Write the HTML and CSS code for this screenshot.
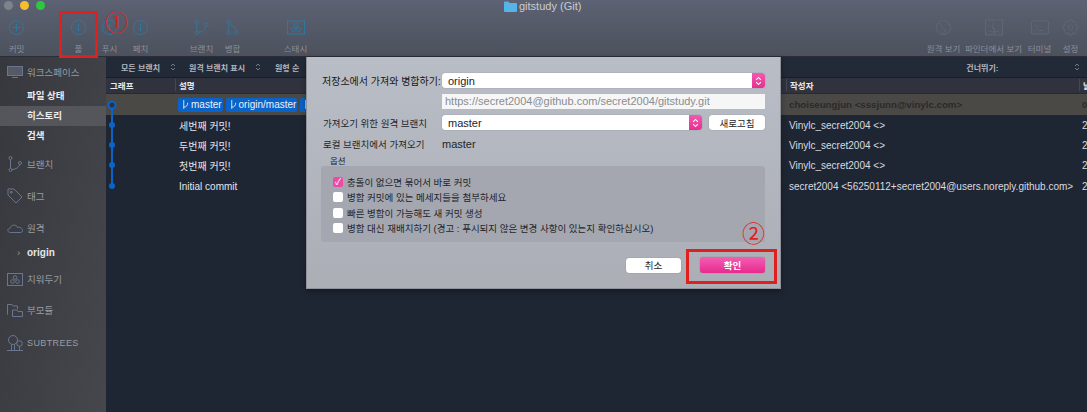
FILE: index.html
```html
<!DOCTYPE html>
<html lang="ko">
<head>
  <meta charset="UTF-8" />
  <title>gitstudy (Git)</title>
  <link rel="stylesheet" href="styles.css">
</head>
<body>
  <div class="window">
    <header class="toolbar">
      <div class="lights"><i class="light grey"></i><i class="light yellow"></i><i class="light green"></i></div>
      <div class="title">
        <svg width="13" height="11" viewBox="0 0 13 11"><path d="M0 1.5Q0 .5 1 .5H4.5L5.5 2H12Q13 2 13 3V10Q13 11 12 11H1Q0 11 0 10Z" fill="#56b4e6"/></svg>
        <span>gitstudy (Git)</span>
      </div>
      <div class="tools">
        <div class="tool commit">
          <svg class="ico" viewBox="0 0 18 18"><circle cx="9" cy="9" r="7.5"/><path d="M9 5V13M5 9H13"/></svg>
          <span>커밋</span>
        </div>
        <div class="tool pull">
          <svg class="ico" viewBox="0 0 18 18"><circle cx="9" cy="9" r="7.5"/><path d="M9 5V12M6.5 10L9 12.5L11.5 10"/></svg>
          <span>풀</span>
        </div>
        <div class="tool">
          <svg class="ico" viewBox="0 0 18 18"><circle cx="9" cy="9" r="7.5"/><path d="M9 13V6M6.5 8L9 5.5L11.5 8"/></svg>
          <span>푸시</span>
        </div>
        <div class="tool">
          <svg class="ico" viewBox="0 0 18 18"><circle cx="9" cy="9" r="7.5"/><path d="M9 5V12M6.5 10L9 12.5L11.5 10"/></svg>
          <span>페치</span>
        </div>
        <div class="tool branch">
          <svg class="ico" viewBox="0 0 18 18"><circle cx="4" cy="3" r="1.8"/><circle cx="4" cy="15" r="1.8"/><circle cx="14" cy="6" r="1.8"/><path d="M4 5V13M5.5 14C10 14 13 11 14 8"/></svg>
          <span>브랜치</span>
        </div>
        <div class="tool">
          <svg class="ico" viewBox="0 0 18 18"><circle cx="5" cy="3" r="1.8"/><circle cx="5" cy="15" r="1.8"/><circle cx="13" cy="14" r="1.8"/><path d="M5 5V13M7 6L12 9.5V12"/></svg>
          <span>병합</span>
        </div>
        <div class="tool stash">
          <svg class="ico wide" viewBox="0 0 18 14"><rect x=".5" y=".5" width="17" height="13"/><circle cx="9" cy="5" r="2"/><circle cx="6.5" cy="9" r="2"/><circle cx="11.5" cy="9" r="2"/></svg>
          <span>스태시</span>
        </div>
        <div class="tool remote">
          <svg class="ico dim" viewBox="0 0 18 18"><circle cx="9" cy="9" r="7.5"/><path d="M4 4C7 6 6 9 9 10S10 15 8 16M12 2C11 5 14 6 16 6"/></svg>
          <span>원격 보기</span>
        </div>
        <div class="tool finder">
          <svg class="ico dim wide" viewBox="0 0 18 16"><rect x=".5" y=".5" width="17" height="15"/><path d="M9 1C8 5 7 8 7 9H9.500V15M4 5V7M13 5V7M4 11C7 13 11 13 14 11"/></svg>
          <span>파인더에서 보기</span>
        </div>
        <div class="tool term">
          <svg class="ico dim wide" viewBox="0 0 18 14"><rect x=".5" y=".5" width="17" height="13" rx="1"/><path d="M4 4L7 7L4 10M8 10H12"/></svg>
          <span>터미널</span>
        </div>
        <div class="tool gear">
          <svg class="ico dim" viewBox="0 0 18 18"><circle cx="9" cy="9" r="2.800"/><path d="M7.500 1H10.500L11 3.300L13.200 2.400L15.500 4.700L14.600 6.900L17 7.500V10.500L14.600 11.100L15.500 13.300L13.200 15.600L11 14.700L10.500 17H7.500L7 14.700L4.800 15.600L2.500 13.300L3.400 11.100L1 10.500V7.500L3.400 6.900L2.500 4.700L4.800 2.400L7 3.300Z"/></svg>
          <span>설정</span>
        </div>
      </div>
    </header>

    <div class="body">
      <aside class="sidebar">
        <div class="side-head workspace">
          <svg class="side-ico" viewBox="0 0 16 12" width="16" height="12"><rect x=".5" y=".5" width="15" height="9" fill="#555a66"/><path d="M5 11.500H11"/></svg>
          <span>워크스페이스</span>
        </div>
        <div class="side-link">파일 상태</div>
        <div class="side-link active">히스토리</div>
        <div class="side-link">검색</div>
        <div class="side-head gap1">
          <svg class="side-ico" viewBox="0 0 16 16" width="16" height="16"><circle cx="3.500" cy="2" r="1.500"/><circle cx="3.500" cy="14" r="1.500"/><circle cx="13" cy="7" r="1.500"/><path d="M3.500 3.500V12.500M5 13.500C9 13.500 12 11 13 8.500"/></svg>
          <span>브랜치</span>
        </div>
        <div class="side-head gap2">
          <svg class="side-ico" viewBox="0 0 16 16" width="16" height="16"><path d="M1 1H7L15 9L9 15L1 7ZM3.500 3.500H5V5H3.500Z"/></svg>
          <span>태그</span>
        </div>
        <div class="side-head gap3">
          <svg class="side-ico" viewBox="0 0 16 10" width="16" height="10"><path d="M3.500 9.500C0 9.500 0 5.500 3 5.500C3.500 2 9 .5 10.500 4.500C13 3.500 15.500 5.500 15.500 7.500C15.500 9 14.500 9.500 13 9.500Z"/></svg>
          <span>원격</span>
        </div>
        <div class="side-origin"><span class="caret">›</span><b>origin</b></div>
        <div class="side-head gap4">
          <svg class="side-ico" viewBox="0 0 16 13" width="16" height="13"><rect x=".5" y=".5" width="15" height="12"/><circle cx="8" cy="4.500" r="1.800"/><circle cx="5.500" cy="8.500" r="1.800"/><circle cx="10.500" cy="8.500" r="1.800"/></svg>
          <span>치워두기</span>
        </div>
        <div class="side-head gap5">
          <svg class="side-ico" viewBox="0 0 16 13" width="16" height="13"><path d="M.5 10.500V.5H5L6 2H10.500V5M5.500 12.500V6H10L11 7.500H15.500V12.500Z"/></svg>
          <span>부모듈</span>
        </div>
        <div class="side-head gap6">
          <svg class="side-ico" viewBox="0 0 16 16" width="16" height="16"><circle cx="6" cy="5" r="4.500"/><circle cx="12.500" cy="8.500" r="2.800"/><path d="M4.500 9.500V15M7.500 9.500V15M12.500 11.500V15M0 15.500H16"/></svg>
          <span class="latin">SUBTREES</span>
        </div>
      </aside>

      <main class="main">
        <div class="filters">
          <span class="filter f-all">모든 브랜치</span>
          <svg class="updown" viewBox="0 0 6 10"><path d="M1 4L3 2L5 4M1 6L3 8L5 6"/></svg>
          <span class="filter f-remote">원격 브랜치 표시</span>
          <svg class="updown" viewBox="0 0 6 10"><path d="M1 4L3 2L5 4M1 6L3 8L5 6"/></svg>
          <span class="filter f-order">원형 순</span>
          <span class="filter f-skip">건너뛰기:</span>
          <svg class="updown skip-arrows" viewBox="0 0 6 10"><path d="M1 4L3 2L5 4M1 6L3 8L5 6"/></svg>
        </div>
        <div class="row head">
          <div class="cell">그래프</div>
          <div class="cell line">설명</div>
          <div class="cell line">작성자</div>
          <div class="cell line">날</div>
        </div>
        <div class="row selected">
          <div class="cell"></div>
          <div class="cell desc">
            <span class="tag"><svg viewBox="0 0 8 10" width="7" height="9"><path d="M2 0V10M2 8C5 8 6.500 6 6.500 3"/></svg>master</span>
            <span class="tag"><svg viewBox="0 0 8 10" width="7" height="9"><path d="M2 0V10M2 8C5 8 6.500 6 6.500 3"/></svg>origin/master</span>
            <span class="tag"><svg viewBox="0 0 8 10" width="7" height="9"><path d="M2 0V10M2 8C5 8 6.500 6 6.500 3"/></svg>origin/HEAD</span>
          </div>
          <div class="cell">choiseungjun &lt;sssjunn@vinylc.com&gt;</div>
          <div class="cell">04</div>
        </div>
        <div class="row"><div class="cell"></div><div class="cell desc">세번째 커밋!</div><div class="cell">Vinylc_secret2004 &lt;&gt;</div><div class="cell">20</div></div>
        <div class="row"><div class="cell"></div><div class="cell desc">두번째 커밋!</div><div class="cell">Vinylc_secret2004 &lt;&gt;</div><div class="cell">20</div></div>
        <div class="row"><div class="cell"></div><div class="cell desc">첫번째 커밋!</div><div class="cell">Vinylc_secret2004 &lt;&gt;</div><div class="cell">20</div></div>
        <div class="row"><div class="cell"></div><div class="cell desc">Initial commit</div><div class="cell">secret2004 &lt;56250112+secret2004@users.noreply.github.com&gt;</div><div class="cell">20</div></div>

        <svg class="graph" width="14" height="100" viewBox="0 0 14 100">
          <path d="M6 10V91" stroke="#0a63c9" stroke-width="2"/>
          <circle cx="6" cy="10" r="3.500" fill="#2a3140" stroke="#0a63c9" stroke-width="2"/>
          <circle cx="6" cy="30" r="3" fill="#0a63c9"/>
          <circle cx="6" cy="50" r="3" fill="#0a63c9"/>
          <circle cx="6" cy="70" r="3" fill="#0a63c9"/>
          <circle cx="6" cy="91" r="3" fill="#0a63c9"/>
        </svg>
      </main>
    </div>

    <section class="dialog">
      <div class="form">
        <label class="lbl strong">저장소에서 가져와 병합하기:</label>
        <div class="select"><span>origin</span><i class="stepper"><svg viewBox="0 0 6 10"><path d="M1 4L3 2L5 4M1 6L3 8L5 6"/></svg></i></div>
        <span></span>
        <div class="url">https://secret2004@github.com/secret2004/gitstudy.git</div>
        <label class="lbl">가져오기 위한 원격 브랜치</label>
        <div class="branch-row">
          <div class="select grow"><span>master</span><i class="stepper"><svg viewBox="0 0 6 10"><path d="M1 4L3 2L5 4M1 6L3 8L5 6"/></svg></i></div>
          <button class="btn refresh">새로고침</button>
        </div>
        <label class="lbl">로컬 브랜치에서 가져오기</label>
        <div class="plain">master</div>
      </div>
      <div class="opt-title">옵션</div>
      <div class="options">
        <div class="opt"><i class="check on">✓</i>충돌이 없으면 묶어서 바로 커밋</div>
        <div class="opt"><i class="check"></i>병합 커밋에 있는 메세지들을 첨부하세요</div>
        <div class="opt"><i class="check"></i>빠른 병합이 가능해도 새 커밋 생성</div>
        <div class="opt"><i class="check"></i>병합 대신 재배치하기 (경고 : 푸시되지 않은 변경 사항이 있는지 확인하십시오)</div>
      </div>
      <div class="actions">
        <button class="btn cancel">취소</button>
        <button class="btn ok">확인</button>
      </div>
    </section>

    <div class="mark mark-pull"></div>
    <div class="mark mark-ok"></div>
    <span class="num num-1">①</span>
    <span class="num num-2">②</span>
  </div>
</body>
</html>
```

FILE: styles.css
```css
* {
  box-sizing: border-box;
}

body {
  margin: 0;
  background: #1f2633;
  font-family: "Liberation Sans", "Noto Sans CJK KR", sans-serif;
  font-size: 10px;
}

.window {
  position: relative;
  width: 1087px;
  height: 412px;
  overflow: hidden;
  display: flex;
  flex-direction: column;
}

/* toolbar */
.toolbar {
  position: relative;
  height: 57px;
  flex: none;
  background: linear-gradient(#5d6274, #4c515d);
  border-bottom: 1px solid #2a2e38;
}

.lights {
  position: absolute;
  left: 4px;
  top: 1px;
  display: flex;
  gap: 7px;
}

.light {
  width: 9px;
  height: 9px;
  border-radius: 50%;
}

.light.grey { background: #7f828c; }
.light.yellow { background: #f5bd2f; }
.light.green { background: #2bc840; }

.title {
  position: absolute;
  left: 504px;
  top: 0;
  height: 12px;
  display: flex;
  align-items: center;
  gap: 2px;
  color: #c9ccd3;
  font-size: 11px;
}

.tools {
  display: flex;
  height: 100%;
  padding-top: 19px;
}

.tool {
  flex: none;
  width: 31px;
  display: flex;
  flex-direction: column;
  align-items: center;
  color: #8b8f9b;
  font-size: 8.500px;
  white-space: nowrap;
}

.tool span {
  margin-top: 7px;
  line-height: 12px;
}

.tool.commit { margin-left: 1px; }
.tool.pull { margin-left: 31px; }
.tool.branch { margin-left: 30px; }
.tool.stash { margin-left: 32px; }
.tool.remote { margin-left: 617px; }
.tool.finder { margin-left: 19px; }
.tool.term { margin-left: 15px; }

.ico {
  width: 17px;
  height: 17px;
  fill: none;
  stroke: #2f779f;
  stroke-width: 1;
}

.ico.wide {
  width: 18px;
}

.ico.dim {
  stroke: #5f6675;
  fill: #555a69;
}

.ico.dim path {
  fill: none;
}

/* sidebar */
.body {
  flex: 1;
  display: flex;
  min-height: 0;
}

.sidebar {
  width: 106px;
  flex: none;
  background: linear-gradient(100deg, #36383d, #46474c);
  color: #9a9ca2;
  font-size: 9.500px;
}

.side-head {
  display: flex;
  align-items: center;
  height: 18px;
  padding-left: 7px;
}

.side-head span {
  margin-left: 4px;
}

.side-head .latin {
  font-size: 9px;
  letter-spacing: .4px;
}

.side-ico {
  fill: none;
  stroke: #6a7690;
  stroke-width: 1;
  flex: none;
}

.workspace { margin-top: 6px; margin-bottom: 5px; }
.gap1 { margin-top: 9px; }
.gap2 { margin-top: 14px; }
.gap3 { margin-top: 14px; }
.gap4 { margin-top: 9px; }
.gap5 { margin-top: 13px; }
.gap6 { margin-top: 15px; }

.side-link {
  height: 20px;
  line-height: 20px;
  padding-left: 27px;
  color: #eceded;
  font-weight: bold;
  font-size: 9.500px;
}

.side-link.active {
  background: #55565b;
}

.side-origin {
  height: 18px;
  margin-top: 6px;
  padding-left: 17px;
  display: flex;
  align-items: center;
  color: #e6e6e8;
}

.side-origin b {
  margin-left: 7px;
  font-size: 10px;
}

.caret {
  color: #9a9ca2;
  width: 3px;
}

/* history table */
.main {
  position: relative;
  flex: 1;
  background: #1f2633;
  color: #d9dbe0;
  font-size: 10px;
  min-width: 0;
}

.filters {
  height: 21px;
  background: #222a38;
  border-bottom: 1px solid #181d27;
  display: flex;
  align-items: center;
  color: #b4b7bf;
  font-size: 8px;
  font-weight: bold;
  white-space: nowrap;
}

.f-all { margin-left: 15px; }
.f-remote { margin-left: 13px; }
.f-order { margin-left: 14px; }
.f-skip { margin-left: 667px; }

.updown {
  flex: none;
  width: 6px;
  height: 10px;
  margin-left: 10px;
  fill: none;
  stroke: #8b8f9b;
  stroke-width: .8;
}

.skip-arrows { margin-left: 76px; }

.row {
  display: grid;
  grid-template-columns: 69px 611px 293px 1fr;
  align-items: center;
  height: 20.300px;
  white-space: nowrap;
}

.cell {
  padding-left: 3px;
  overflow: hidden;
}

.row .cell:first-child { padding-left: 4px; }

.row.head {
  height: 16px;
  padding-bottom: 1px;
  background: #30333e;
  border-bottom: 1px solid #262a35;
  color: #e8e9ec;
  font-size: 8.500px;
  font-weight: bold;
}

.head .line {
  border-left: 1px solid #444855;
}

.row.selected {
  height: 21px;
  background: #4a4946;
  color: #2b2a29;
  font-size: 9.700px;
  font-weight: bold;
}

.cell.desc {
  display: flex;
  align-items: center;
  gap: 3px;
  padding-left: 4px;
  color: #e4e5e9;
  font-weight: normal;
}

.selected .cell.desc {
  padding-left: 3px;
}

.tag {
  display: flex;
  align-items: center;
  gap: 2px;
  height: 14px;
  padding: 0 1px 0 4px;
  border-radius: 2px;
  background: #0a63c9;
  color: #ecf2fb;
  font-size: 10px;
}

.tag svg {
  fill: none;
  stroke: #ecf2fb;
  stroke-width: 1;
}

.graph {
  position: absolute;
  left: 0;
  top: 38px;
}

/* pull dialog */
.dialog {
  position: absolute;
  left: 306px;
  top: 57px;
  width: 475px;
  height: 232px;
  padding: 16px 15px 0 14px;
  background: linear-gradient(#b9bdc6, #abaeb5);
  border: 1px solid #8f929a;
  border-top: none;
  color: #23252a;
  font-size: 9.500px;
  box-shadow: 0 2px 6px rgba(0, 0, 0, .35);
}

.form {
  display: grid;
  grid-template-columns: 121px 323px;
  grid-template-rows: 15px 15px 15px 15px;
  row-gap: 6px;
  align-items: center;
}

.lbl {
  padding-left: 2px;
  white-space: nowrap;
}

.lbl.strong {
  padding-left: 1px;
  color: #15171b;
  font-size: 10px;
}

.select {
  display: flex;
  align-items: center;
  justify-content: space-between;
  height: 15px;
  padding-left: 6px;
  border-radius: 3px;
  background: #fff;
  box-shadow: 0 0 1px rgba(0, 0, 0, .4);
  font-size: 11px;
}

.grow {
  flex: 1;
}

.stepper {
  display: flex;
  align-items: center;
  justify-content: center;
  width: 13px;
  height: 15px;
  border-radius: 0 3px 3px 0;
  background: linear-gradient(#f25ab0, #e82e90);
}

.stepper svg {
  width: 7px;
  height: 12px;
  fill: none;
  stroke: #fff;
  stroke-width: .9;
}

.url {
  height: 15px;
  line-height: 15px;
  padding-left: 3px;
  background: #f6f6f7;
  color: #8a8c91;
  font-size: 11px;
  white-space: nowrap;
}

.branch-row {
  display: flex;
  gap: 7px;
}

.plain {
  font-size: 11px;
}

.btn {
  height: 15px;
  padding: 0;
  border: none;
  border-radius: 3px;
  background: #fff;
  color: #26282c;
  font-family: inherit;
  font-size: 9.500px;
  box-shadow: 0 0 1px rgba(0, 0, 0, .45);
}

.refresh {
  width: 56px;
}

.opt-title {
  margin: 5px 0 0 9px;
  height: 10px;
  line-height: 10px;
  font-size: 8.500px;
}

.options {
  height: 76px;
  padding: 8px 0 0 12px;
  border-radius: 3px;
  background: #a4a7af;
  width: 444px;
}

.opt {
  display: flex;
  align-items: center;
  height: 15.500px;
  white-space: nowrap;
}

.check {
  width: 10px;
  height: 10px;
  margin-right: 4px;
  border-radius: 2px;
  background: #fff;
  color: #fff;
  font-size: 9px;
  font-style: normal;
  line-height: 10px;
  text-align: center;
}

.check.on {
  background: #ec4aa6;
}

.actions {
  display: flex;
  justify-content: flex-end;
  align-items: center;
  gap: 19px;
  margin-top: 15px;
  width: 444px;
}

.cancel {
  width: 55px;
}

.ok {
  width: 65px;
  height: 16px;
  background: linear-gradient(#f45fb3, #e62a8d);
  color: #fff;
  font-weight: bold;
}

/* red annotations on top of the screenshot */
.mark {
  position: absolute;
  border: 3px solid #e0201f;
}

.mark-pull {
  left: 59px;
  top: 11px;
  width: 39px;
  height: 47px;
}

.mark-ok {
  left: 686px;
  top: 249px;
  width: 91px;
  height: 35px;
}

.num {
  position: absolute;
  color: #e0201f;
  font-family: "Noto Sans CJK KR", sans-serif;
  font-size: 23px;
  line-height: 22px;
}

.num-1 { left: 105px; top: 10px; }
.num-2 { left: 742px; top: 221px; }
```
